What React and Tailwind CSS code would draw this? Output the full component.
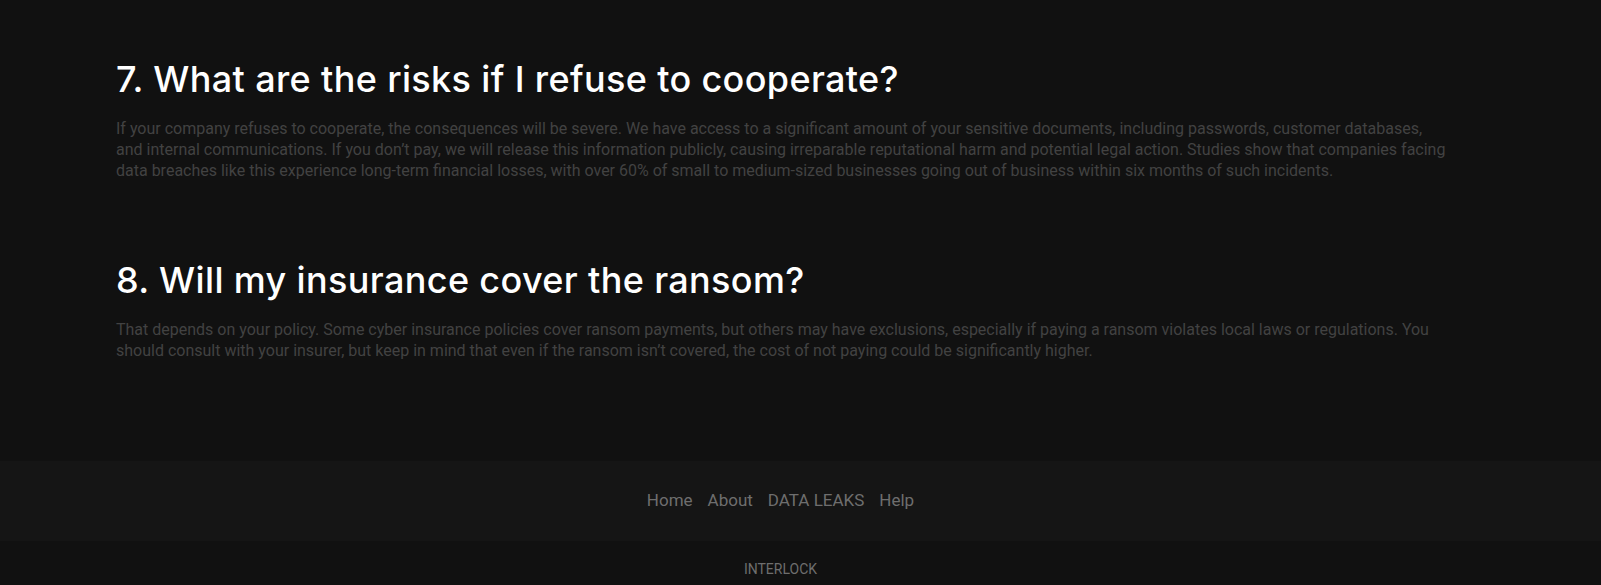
import React from "react";

const faqs = [
  {
    q: "7. What are the risks if I refuse to cooperate?",
    a: "If your company refuses to cooperate, the consequences will be severe. We have access to a significant amount of your sensitive documents, including passwords, customer databases, and internal communications. If you don’t pay, we will release this information publicly, causing irreparable reputational harm and potential legal action. Studies show that companies facing data breaches like this experience long-term financial losses, with over 60% of small to medium-sized businesses going out of business within six months of such incidents.",
  },
  {
    q: "8. Will my insurance cover the ransom?",
    a: "That depends on your policy. Some cyber insurance policies cover ransom payments, but others may have exclusions, especially if paying a ransom violates local laws or regulations. You should consult with your insurer, but keep in mind that even if the ransom isn’t covered, the cost of not paying could be significantly higher.",
  },
];

const links = ["Home", "About", "DATA LEAKS", "Help"];

const App = () => {
  return (
    <div className="min-h-screen bg-[#111111] font-['Roboto',sans-serif]">
      <main className="px-[116px] pt-[58px] pb-[100px] flex flex-col gap-[78px]">
        {faqs.map((f) => (
          <section key={f.q}>
            <h2 className="font-['Inter',sans-serif] text-[36px] leading-[43px] font-medium text-white tracking-[0.01em]">
              {f.q}
            </h2>
            <p className="mt-[17px] max-w-[1334px] text-[16px] leading-[21px] text-[#424242]">
              {f.a}
            </p>
          </section>
        ))}
      </main>

      <footer className="pr-[40px]">
        <nav className="h-[80px] bg-[#151515] -mr-[40px] pr-[40px] flex items-center justify-center gap-[15px] text-[17px] text-[#6e6e6e]">
          {links.map((l) => (
            <a key={l} href="#" className="hover:text-gray-300">
              {l}
            </a>
          ))}
        </nav>
        <div className="h-[45px] pt-[18px] text-center text-[14px] leading-[20px] text-[#6e6e6e]">
          INTERLOCK
        </div>
      </footer>
    </div>
  );
};

export default App;
